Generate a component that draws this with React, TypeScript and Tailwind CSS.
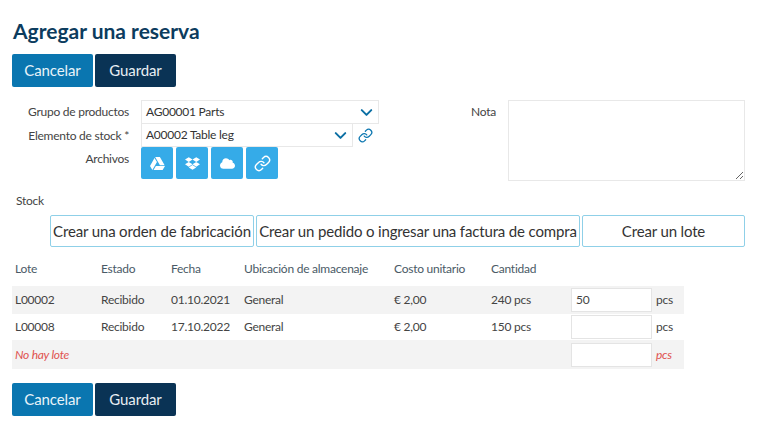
import { ChevronDown, Link } from "lucide-react";
import { FaCloud, FaDropbox, FaGoogleDrive } from "react-icons/fa";

const Actions = () => (
  <div className="flex gap-[2px]">
    <button className="w-[81px] h-[33px] rounded-[2px] bg-[#0a76b0] text-[15px] tracking-[-0.1px] text-[#e8f3f9]">
      Cancelar
    </button>
    <button className="w-[81px] h-[33px] rounded-[2px] bg-[#0a3355] text-[15px] tracking-[-0.1px] text-[#e8eef3]">
      Guardar
    </button>
  </div>
);

const Select = ({ value, width }: { value: string; width: string }) => (
  <div
    className={`${width} h-[24px] flex items-center justify-between border border-[#e8e8e8] pl-[4px] pr-[2px] text-[#333]`}
  >
    <span>{value}</span>
    <ChevronDown size={19} strokeWidth={2.5} className="text-[#0b6fa4]" />
  </div>
);

const rows = [
  { lote: "L00002", estado: "Recibido", fecha: "01.10.2021", ubic: "General", costo: "€ 2,00", cant: "240 pcs", val: "50", bg: "bg-[#f3f3f3]", h: "h-[28px]" },
  { lote: "L00008", estado: "Recibido", fecha: "17.10.2022", ubic: "General", costo: "€ 2,00", cant: "150 pcs", val: "", bg: "bg-white", h: "h-[26px]" },
];

export default function App() {
  return (
    <div className="w-[764px] h-[441px] bg-white pl-3 pt-[19px] font-['Lato','Liberation_Sans',sans-serif] text-[12px] tracking-[-0.25px] text-[#444] overflow-hidden">
      <h1 className="ml-px text-[21px] tracking-normal leading-[24px] font-bold text-[#0c3c5e] mb-[11px]">
        Agregar una reserva
      </h1>
      <Actions />

      <div className="flex mt-[13px] h-[81px]">
        <div className="w-[367px] flex">
          <div className="w-[117px] text-right">
            <div className="h-[24px] leading-[24px]">Grupo de productos</div>
            <div className="h-[23px] leading-[23px]">Elemento de stock *</div>
            <div className="h-[24px] leading-[23px]">Archivos</div>
          </div>
          <div className="ml-[12px]">
            <Select value="AG00001 Parts" width="w-[238px]" />
            <div className="flex items-center -mt-px">
              <Select value="A00002 Table leg" width="w-[212px]" />
              <Link size={15} strokeWidth={2} className="ml-[5px] text-[#0b76b0]" />
            </div>
            <div className="flex gap-[3px]">
              {[FaGoogleDrive, FaDropbox, FaCloud, Link].map((Icon, i) => (
                <div
                  key={i}
                  className="w-[32px] h-[32px] rounded-[2px] bg-[#35abe8] text-white flex items-center justify-center"
                >
                  <Icon size={i === 3 ? 17 : 15} className="text-white" />
                </div>
              ))}
            </div>
          </div>
        </div>
        <div className="w-[117px] text-right leading-[24px]">Nota</div>
        <textarea className="ml-[12px] w-[237px] h-[81px] border border-[#e8e8e8] bg-white" />
      </div>

      <div className="ml-[4px] mt-[12px] leading-[16px]">Stock</div>

      <div className="ml-[38px] mt-[6px] flex gap-[2px] text-[15px] tracking-[-0.15px] text-[#333]">
        <button className="w-[204px] h-[32px] rounded-[2px] border border-[#8fd0e8] whitespace-nowrap">
          Crear una orden de fabricación
        </button>
        <button className="w-[324px] h-[32px] rounded-[2px] border border-[#8fd0e8] whitespace-nowrap">
          Crear un pedido o ingresar una factura de compra
        </button>
        <button className="w-[163px] h-[32px] rounded-[2px] border border-[#8fd0e8] whitespace-nowrap">
          Crear un lote
        </button>
      </div>

      <div className="w-[672px] mt-[12px]">
        <div className="flex h-[27px] items-center pl-[3px] pb-[7px] text-[#4a5a66]">
          <div className="w-[86px]">Lote</div>
          <div className="w-[70px]">Estado</div>
          <div className="w-[73px]">Fecha</div>
          <div className="w-[150px]">Ubicación de almacenaje</div>
          <div className="w-[97px]">Costo unitario</div>
          <div className="w-[80px]">Cantidad</div>
        </div>
        {rows.map((r) => (
          <div key={r.lote} className={`flex items-center pl-[3px] ${r.bg} ${r.h}`}>
            <div className="w-[86px]">{r.lote}</div>
            <div className="w-[70px]">{r.estado}</div>
            <div className="w-[73px]">{r.fecha}</div>
            <div className="w-[150px]">{r.ubic}</div>
            <div className="w-[97px]">{r.costo}</div>
            <div className="w-[80px]">{r.cant}</div>
            <div className="w-[81px] h-[24px] bg-white border border-[#e4e4e4] pl-[4px] leading-[22px]">{r.val}</div>
            <div className="ml-[4px]">pcs</div>
          </div>
        ))}
        <div className="flex items-center pl-[3px] bg-[#f3f3f3] h-[29px] italic text-[#e0524f]">
          <div className="w-[556px]">No hay lote</div>
          <div className="w-[81px] h-[24px] bg-white border border-[#e4e4e4]" />
          <div className="ml-[4px]">pcs</div>
        </div>
      </div>

      <div className="mt-[14px]">
        <Actions />
      </div>
    </div>
  );
}
